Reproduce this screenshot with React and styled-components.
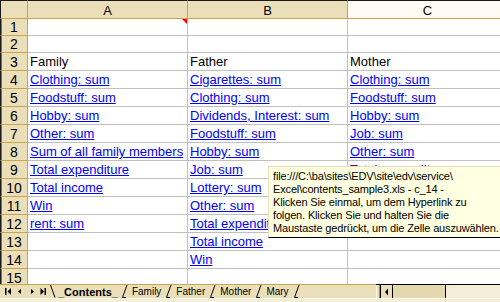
import React from "react";
import styled, { createGlobalStyle } from "styled-components";

const GlobalStyle = createGlobalStyle`
  html, body {
    margin: 0;
    padding: 0;
  }
  body {
    width: 500px;
    height: 302px;
    overflow: hidden;
    background: #ffffff;
    font-family: "Liberation Sans", Arial, sans-serif;
  }
`;

const TAN = "#ebdfba";
const GOLD = "#c6a54c";
const CREAM = "#fdfbf2";
const GRID = "#c0c0c0";

const columns = [
  { letter: "A", selected: true },
  { letter: "B", selected: true },
  { letter: "C", selected: false },
];

// kind: "text" | "link" | "visited"
const rows = [
  { n: 1, cells: [{ comment: true }, null, null] },
  { n: 2, cells: [null, null, null] },
  {
    n: 3,
    cells: [
      { text: "Family", kind: "text" },
      { text: "Father", kind: "text" },
      { text: "Mother", kind: "text" },
    ],
  },
  {
    n: 4,
    cells: [
      { text: "Clothing: sum", kind: "link" },
      { text: "Cigarettes: sum", kind: "link" },
      { text: "Clothing: sum", kind: "link" },
    ],
  },
  {
    n: 5,
    cells: [
      { text: "Foodstuff: sum", kind: "link" },
      { text: "Clothing: sum", kind: "link" },
      { text: "Foodstuff: sum", kind: "link" },
    ],
  },
  {
    n: 6,
    cells: [
      { text: "Hobby: sum", kind: "link" },
      { text: "Dividends, Interest: sum", kind: "link" },
      { text: "Hobby: sum", kind: "link" },
    ],
  },
  {
    n: 7,
    cells: [
      { text: "Other: sum", kind: "link" },
      { text: "Foodstuff: sum", kind: "link" },
      { text: "Job: sum", kind: "link" },
    ],
  },
  {
    n: 8,
    cells: [
      { text: "Sum of all family members", kind: "link" },
      { text: "Hobby: sum", kind: "link" },
      { text: "Other: sum", kind: "link" },
    ],
  },
  {
    n: 9,
    cells: [
      { text: "Total expenditure", kind: "link" },
      { text: "Job: sum", kind: "link" },
      { text: "Total expenditure", kind: "visited" },
    ],
  },
  {
    n: 10,
    cells: [
      { text: "Total income", kind: "link" },
      { text: "Lottery: sum", kind: "link" },
      null,
    ],
  },
  {
    n: 11,
    cells: [
      { text: "Win", kind: "link" },
      { text: "Other: sum", kind: "link" },
      null,
    ],
  },
  {
    n: 12,
    cells: [
      { text: "rent: sum", kind: "link" },
      { text: "Total expenditure", kind: "link" },
      null,
    ],
  },
  { n: 13, cells: [null, { text: "Total income", kind: "link" }, null] },
  { n: 14, cells: [null, { text: "Win", kind: "link" }, null] },
  { n: 15, cells: [null, null, null] },
];

const tooltipLines = [
  "file:///C:\\ba\\sites\\EDV\\site\\edv\\service\\",
  "Excel\\contents_sample3.xls - c_14 -",
  "Klicken Sie einmal, um dem Hyperlink zu",
  "folgen. Klicken Sie und halten Sie die",
  "Maustaste gedrückt, um die Zelle auszuwählen.",
];

const sheets = ["Family", "Father", "Mother", "Mary"];

export default function App() {
  return (
    <>
      <GlobalStyle />
      <Window>
        <Sheet>
          <Grid>
            <Corner />
            {columns.map((col) => (
              <ColHeader key={col.letter} $selected={col.selected}>
                {col.letter}
              </ColHeader>
            ))}
            {rows.map((row) => (
              <React.Fragment key={row.n}>
                <RowHeader>{row.n}</RowHeader>
                {row.cells.map((cell, i) => (
                  <Cell key={i}>
                    {cell && cell.text && (
                      <CellText $kind={cell.kind}>{cell.text}</CellText>
                    )}
                    {cell && cell.comment && <CommentMark />}
                  </Cell>
                ))}
              </React.Fragment>
            ))}
          </Grid>

          <Tooltip>
            {tooltipLines.map((line) => (
              <div key={line}>{line}</div>
            ))}
          </Tooltip>
        </Sheet>

        <TabStrip>
          <NavButtons>
            <NavButton>
              <svg width="8" height="8" viewBox="0 0 8 8">
                <rect x="0" y="0" width="1.5" height="7" fill="#000" />
                <path d="M6 0 L2.5 3.5 L6 7 Z" fill="#000" />
              </svg>
            </NavButton>
            <NavButton>
              <svg width="8" height="8" viewBox="0 0 8 8">
                <path d="M5 1 L2 3.5 L5 6 Z" fill="#000" />
              </svg>
            </NavButton>
            <NavButton>
              <svg width="8" height="8" viewBox="0 0 8 8">
                <path d="M3 1 L6 3.5 L3 6 Z" fill="#000" />
              </svg>
            </NavButton>
            <NavButton>
              <svg width="8" height="8" viewBox="0 0 8 8">
                <path d="M1.5 0 L5 3.5 L1.5 7 Z" fill="#000" />
                <rect x="5.5" y="0" width="1.5" height="7" fill="#000" />
              </svg>
            </NavButton>
          </NavButtons>

          <Tabs>
            <Slant $back />
            <Tab $active>_Contents_</Tab>
            <Slant />
            {sheets.map((name) => (
              <React.Fragment key={name}>
                <Tab>{name}</Tab>
                <Slant />
              </React.Fragment>
            ))}
          </Tabs>

          <ScrollArea>
            <Splitter />
            <ScrollButton>
              <svg width="6" height="8" viewBox="0 0 6 8">
                <path d="M4 0.5 L1 4 L4 7.5 Z" fill="#000" />
              </svg>
            </ScrollButton>
            <ScrollThumb />
            <ScrollTrack />
          </ScrollArea>
        </TabStrip>
        <Footer />
      </Window>
    </>
  );
}

function Slant({ $back }) {
  return (
    <SlantBox>
      <svg width="8" height="13" viewBox="0 0 8 13">
        {$back ? (
          <path d="M1.5 0 L6 12.5" stroke="#000" strokeWidth="1" fill="none" />
        ) : (
          <path
            d="M1.5 12.5 L6 0 M1.5 12.5 H5"
            stroke="#000"
            strokeWidth="1"
            fill="none"
          />
        )}
      </svg>
    </SlantBox>
  );
}

const Window = styled.div`
  width: 500px;
  height: 302px;
  display: flex;
  flex-direction: column;
  overflow: hidden;
`;

const Sheet = styled.div`
  position: relative;
  height: 284px;
  overflow: hidden;
`;

const Grid = styled.div`
  display: grid;
  grid-template-columns: 28px 160px 160px 160px;
  grid-template-rows: 19px 17px 17px repeat(13, 18px);
  font-size: 13px;
`;

const Corner = styled.div`
  box-sizing: border-box;
  background: ${TAN};
  border-top: 1px solid #1a1a1a;
  border-left: 1px solid #1a1a1a;
  border-right: 1px solid ${GOLD};
  border-bottom: 1px solid ${GOLD};
`;

const ColHeader = styled.div`
  box-sizing: border-box;
  display: flex;
  align-items: center;
  justify-content: center;
  background: ${(p) => (p.$selected ? TAN : CREAM)};
  border-top: 1px solid #1a1a1a;
  border-right: 1px solid ${GOLD};
  border-bottom: 1px solid ${GOLD};
  color: #000;
  font-size: 13px;
  line-height: 15px;
  padding-top: 1px;
`;

const RowHeader = styled.div`
  box-sizing: border-box;
  display: flex;
  align-items: center;
  justify-content: center;
  background: ${TAN};
  border-left: 1px solid #1a1a1a;
  border-right: 1px solid ${GOLD};
  border-bottom: 1px solid ${GOLD};
  box-shadow: inset 1px 0 0 #8a7434;
  color: #000;
  font-size: 14px;
  line-height: 16px;
`;

const Cell = styled.div`
  position: relative;
  box-sizing: border-box;
  display: flex;
  align-items: flex-end;
  border-right: 1px solid ${GRID};
  border-bottom: 1px solid ${GRID};
  overflow: hidden;
  white-space: nowrap;
  padding: 0 2px;
`;

const CellText = styled.span`
  line-height: 16px;
  color: ${(p) =>
    p.$kind === "link" ? "#0000ff" : p.$kind === "visited" ? "#800080" : "#000"};
  text-decoration: ${(p) => (p.$kind === "text" ? "none" : "underline")};
  text-underline-offset: 1px;
`;

const CommentMark = styled.span`
  position: absolute;
  top: 0;
  right: 0;
  width: 0;
  height: 0;
  border-top: 5px solid #ff0000;
  border-left: 5px solid transparent;
`;

const Tooltip = styled.div`
  position: absolute;
  left: 268px;
  top: 166px;
  width: 240px;
  box-sizing: border-box;
  padding: 3px 4px 2px 4px;
  background: #ffffe1;
  border-top: 1px solid #e6dcb8;
  border-left: 1px solid #e6dcb8;
  border-bottom: 1px solid #000;
  font-family: "Liberation Sans", Arial, sans-serif;
  font-size: 11px;
  letter-spacing: -0.15px;
  line-height: 13px;
  color: #000;
  white-space: nowrap;
`;

const TabStrip = styled.div`
  display: flex;
  height: 14px;
  box-sizing: border-box;
  background: ${TAN};
  border-top: 1px solid ${GOLD};
`;

const NavButtons = styled.div`
  display: flex;
  align-items: center;
  width: 49px;
  padding-left: 3px;
  box-sizing: border-box;
`;

const NavButton = styled.div`
  width: 12px;
  height: 13px;
  display: flex;
  align-items: center;
  justify-content: center;
`;

const Tabs = styled.div`
  display: flex;
  align-items: stretch;
  width: 327px;
`;

const SlantBox = styled.div`
  display: flex;
  align-items: flex-end;
  width: 8px;
`;

const Tab = styled.div`
  display: flex;
  align-items: center;
  padding: ${(p) => (p.$active ? "0 3px 0 1px" : "0 4px 0 3px")};
  font-size: ${(p) => (p.$active ? "11px" : "10px")};
  font-weight: ${(p) => (p.$active ? 700 : 400)};
  line-height: 12px;
  color: #000;
  white-space: nowrap;
`;

const ScrollArea = styled.div`
  flex: 1;
  display: flex;
  margin-top: -1px;
  border-top: 1px solid #000;
`;

const Splitter = styled.div`
  width: 4px;
  border-left: 1px solid #fffbe8;
  border-right: 1px solid #a89050;
  box-sizing: border-box;
`;

const ScrollButton = styled.div`
  width: 13px;
  display: flex;
  align-items: center;
  justify-content: center;
  box-sizing: border-box;
  border-left: 1px solid #000;
  border-right: 1px solid #000;
  background: ${TAN};
`;

const ScrollThumb = styled.div`
  width: 53px;
  box-sizing: border-box;
  border-right: 1px solid #000;
  background: #e6d8ae;
`;

const ScrollTrack = styled.div`
  flex: 1;
  background: #f3eed8;
`;

const Footer = styled.div`
  flex: 1;
  background: #f3eed8;
  border-top: 1px solid #fffdf2;
`;
